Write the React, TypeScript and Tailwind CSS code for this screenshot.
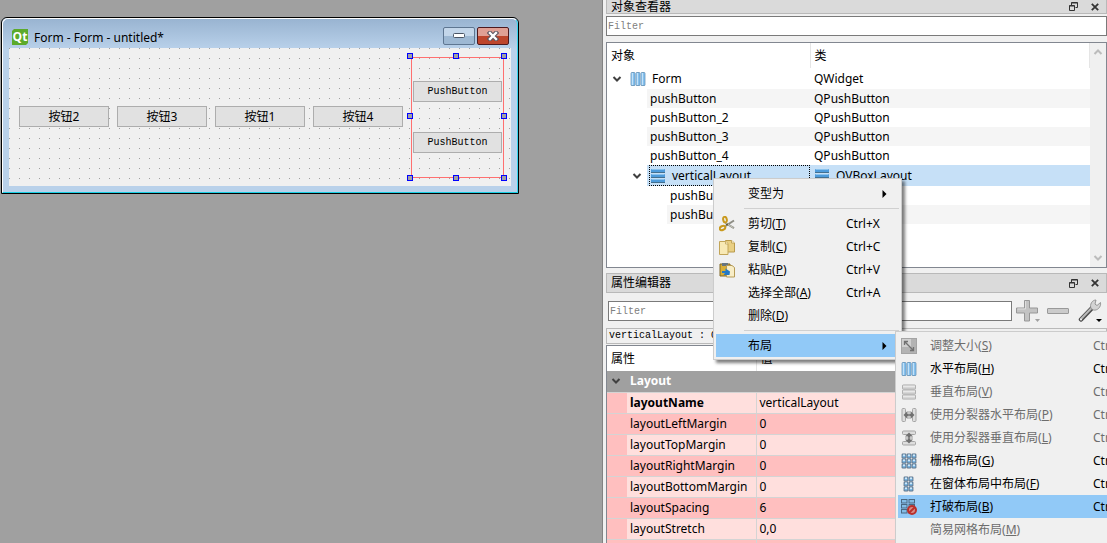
import { useState } from "react";
import type { ReactNode } from "react";
import clsx from "clsx";

type MenuEntry = {
  label: string;
  mnemonic: string;
  shortcut?: string;
  icon?: ReactNode;
  disabled?: boolean;
  active?: boolean;
};

/* ---------- icons ---------- */

function Bars({ vertical, grey }: { vertical?: boolean; grey?: boolean }) {
  const fill = grey ? "#d2d2d2" : "#79baec";
  const light = grey ? "#e8e8e8" : "#c3e2f8";
  const edge = grey ? "#a8a8a8" : "#6f94b3";
  return (
    <svg width="16" height="16" viewBox="0 0 16 16">
      <g transform={vertical ? undefined : "matrix(0 1 1 0 0 0)"}>
        {[1, 6, 11].map((p) => (
          <g key={p}>
            <rect x={p - 0.4} y="1" width="4.800" height="14" rx="1.500" fill={edge} />
            <rect x={p + 0.3} y="1.800" width="3.400" height="12.400" rx="0.500" fill={fill} />
            <rect x={p + 0.8} y="2" width="1.400" height="12" fill={light} />
          </g>
        ))}
      </g>
    </svg>
  );
}

function LayoutBars() {
  return (
    <svg width="16" height="16" viewBox="0 0 16 16">
      {[1, 6, 11].map((p) => (
        <g key={p}>
          <rect x="1" y={p} width="14" height="4" rx="1" fill="#4d9bdb" />
          <rect x="2" y={p} width="12" height="1" fill="#8ac3ee" />
          <rect x="1" y={p + 3} width="14" height="1" fill="#44708f" />
        </g>
      ))}
    </svg>
  );
}

function Squares({ cols }: { cols: number[] }) {
  return (
    <svg width="16" height="16" viewBox="0 0 16 16">
      {cols.map((x) =>
        [1, 6, 11].map((y) => (
          <g key={`${x}-${y}`}>
            <rect x={x - 0.4} y={y - 0.4} width="4.800" height="4.800" rx="1.200" fill="#5d7389" />
            <rect x={x + 0.5} y={y + 0.5} width="3" height="3" fill="#7db9e6" />
            <rect x={x + 1} y={y + 0.5} width="2" height="1.500" fill="#cfe7f8" />
          </g>
        )),
      )}
    </svg>
  );
}

function AdjustIcon() {
  return (
    <svg width="16" height="16" viewBox="0 0 16 16">
      <rect x="0.5" y="0.5" width="15" height="15" fill="#b3b3b3" stroke="#a4a4a4" />
      <path d="M1 1h9v8H1z" fill="#d0d0d0" />
      <path d="M4 4l8 8M3.5 7V3.5H7M12.5 9v3.5H9" fill="none" stroke="#707070" strokeWidth="1.3" />
    </svg>
  );
}

function SplitIcon({ vertical }: { vertical?: boolean }) {
  return (
    <svg width="16" height="16" viewBox="0 0 16 16">
      <g transform={vertical ? "rotate(90 8 8)" : undefined}>
        <rect x="1" y="1.5" width="3.500" height="13" rx="1" fill="#dedede" stroke="#a5a5a5" />
        <rect x="11.5" y="1.5" width="3.500" height="13" rx="1" fill="#dedede" stroke="#a5a5a5" />
        <path d="M2.500 8l4-4v3h3V4l4 4-4 4V9h-3v3z" fill="#707070" />
        <path d="M7.500 4h1v8h-1z" fill="#9c9c9c" />
      </g>
    </svg>
  );
}

function BreakIcon() {
  return (
    <svg width="16" height="16" viewBox="0 0 16 16">
      {[0, 5, 10].map((y) => (
        <g key={y}>
          <path d={`M0 ${y}h6.500v4.500H0zM7.500 ${y}h6.500v4.500H7.500z`} fill="#4a6983" />
          <path d={`M1 ${y + 1}h4.500v2.500H1zM8.500 ${y + 1}h4.500v2.500H8.500z`} fill="#83bce6" />
        </g>
      ))}
      <circle cx="11" cy="11" r="4" fill="#d98a86" stroke="#b9302c" strokeWidth="2" />
      <path d="M8.200 13.800l5.600-5.600" stroke="#b9302c" strokeWidth="2" />
    </svg>
  );
}

function CutIcon() {
  return (
    <svg width="16" height="16" viewBox="0 0 16 16" fill="none">
      <path d="M6.500 7L15 12.200M6.500 10L15 4.500" stroke="#8d8d84" strokeWidth="2" />
      <path d="M7 7.200L14.500 11.800" stroke="#d5d5cc" strokeWidth="0.8" />
      <ellipse cx="6" cy="3.600" rx="1.800" ry="2.800" stroke="#c99a1e" strokeWidth="2" transform="rotate(-12 6 3.600)" />
      <ellipse cx="3.500" cy="12" rx="2.900" ry="1.900" stroke="#c99a1e" strokeWidth="2" transform="rotate(-25 3.500 12)" />
      <circle cx="8" cy="8.500" r="1" fill="#6b5a25" />
    </svg>
  );
}

function CopyIcon() {
  return (
    <svg width="16" height="16" viewBox="0 0 16 16">
      <path d="M6.500 1.500h6l3 2.500v9h-9z" fill="#e9cf83" stroke="#b89a4c" />
      <path d="M0.500 2.500h6l2.500 2v11h-8.500z" fill="#f8e9b5" stroke="#c2a558" />
      <path d="M6.500 2.500v2.500H9" fill="#fff7da" stroke="#c2a558" strokeWidth="0.800" />
      <path d="M12.500 1.500V4h3" fill="#fff7da" stroke="#b89a4c" strokeWidth="0.800" />
    </svg>
  );
}

function PasteIcon() {
  return (
    <svg width="16" height="16" viewBox="0 0 16 16">
      <path d="M1 2h10v12H1z" fill="#d9ae35" stroke="#7e6726" />
      <path d="M3 1h6v3H3z" fill="#66747f" />
      <path d="M7.500 3.500h5.500l2.500 2v9.500h-8z" fill="#f8edc6" stroke="#b69b56" />
      <path d="M3 9h3.500V6.500l4.500 3-0.500 3.500H4.500l1.500-2H3z" fill="#2479c4" />
    </svg>
  );
}

function Chevron({ up, pale }: { up?: boolean; pale?: boolean }) {
  return (
    <svg width="10" height="8" viewBox="0 0 10 8" fill="none">
      <path d={up ? "M1.500 6L5 2.500 8.500 6" : "M1.500 2L5 5.500 8.500 2"} stroke={pale ? "#bcbcbc" : "#404040"} strokeWidth="2" />
    </svg>
  );
}

function FloatIcon() {
  return (
    <svg width="9" height="9" viewBox="0 0 9 9" fill="none" stroke="#333">
      <path d="M2.500 3V0.500h6v5H6.500M2.500 1h6" />
      <path d="M0.500 3.500h5v5h-5zM0.500 4h5" />
    </svg>
  );
}

function CloseIcon() {
  return (
    <svg width="8" height="8" viewBox="0 0 8 8">
      <path d="M0.800 0.800l6.400 6.400M7.200 0.800L0.800 7.200" stroke="#333" strokeWidth="1.800" />
    </svg>
  );
}

function PlusIcon() {
  return (
    <svg width="24" height="24" viewBox="0 0 24 24">
      <path d="M8.500 1.500h5v7.500h8v5h-8v8h-5v-8H0.500V9h8z" fill="#c3c3c3" stroke="#979797" />
      <path d="M9.500 2v8H1.500" fill="none" stroke="#dedede" />
      <path d="M19 20h5l-2.500 3z" fill="#a0a0a0" />
    </svg>
  );
}

function MinusIcon() {
  return (
    <svg width="24" height="24" viewBox="0 0 24 24">
      <rect x="0.500" y="9.500" width="21" height="5" rx="0.500" fill="#cbcbcb" stroke="#999" />
    </svg>
  );
}

function WrenchIcon() {
  return (
    <svg width="24" height="24" viewBox="0 0 24 24">
      <path d="M3 20.500L16 7" stroke="#4e4e4e" strokeWidth="4.500" strokeLinecap="round" />
      <path d="M3 20L15.500 7" stroke="#b9b9b9" strokeWidth="2" strokeLinecap="round" />
      <path d="M13 9.500c-1.500-4 1-8.500 5-8.500l-1 4 2 1.500 3.500-3c1 4.500-3.500 8.500-7 7.500z" fill="#d3d3d3" stroke="#858585" strokeWidth="0.800" />
      <circle cx="3" cy="20.500" r="1" fill="#f0f0f0" />
      <path d="M18 20h6l-3 3z" fill="#000" />
    </svg>
  );
}

/* ---------- data ---------- */

const treeRows = [
  { name: "pushButton", type: "QPushButton", shaded: true },
  { name: "pushButton_2", type: "QPushButton" },
  { name: "pushButton_3", type: "QPushButton", shaded: true },
  { name: "pushButton_4", type: "QPushButton" },
];

const properties = [
  { name: "layoutName", value: "verticalLayout", bold: true },
  { name: "layoutLeftMargin", value: "0" },
  { name: "layoutTopMargin", value: "0" },
  { name: "layoutRightMargin", value: "0" },
  { name: "layoutBottomMargin", value: "0" },
  { name: "layoutSpacing", value: "6" },
  { name: "layoutStretch", value: "0,0" },
  { name: "", value: "" },
];

const editEntries: MenuEntry[] = [
  { label: "剪切", mnemonic: "T", shortcut: "Ctrl+X", icon: <CutIcon /> },
  { label: "复制", mnemonic: "C", shortcut: "Ctrl+C", icon: <CopyIcon /> },
  { label: "粘贴", mnemonic: "P", shortcut: "Ctrl+V", icon: <PasteIcon /> },
  { label: "选择全部", mnemonic: "A", shortcut: "Ctrl+A" },
  { label: "删除", mnemonic: "D" },
];

const layoutEntries: MenuEntry[] = [
  { label: "调整大小", mnemonic: "S", shortcut: "Ctrl+J", icon: <AdjustIcon />, disabled: true },
  { label: "水平布局", mnemonic: "H", shortcut: "Ctrl+1", icon: <Bars vertical /> },
  { label: "垂直布局", mnemonic: "V", shortcut: "Ctrl+2", icon: <Bars grey />, disabled: true },
  { label: "使用分裂器水平布局", mnemonic: "P", shortcut: "Ctrl+3", icon: <SplitIcon />, disabled: true },
  { label: "使用分裂器垂直布局", mnemonic: "L", shortcut: "Ctrl+4", icon: <SplitIcon vertical />, disabled: true },
  { label: "栅格布局", mnemonic: "G", shortcut: "Ctrl+5", icon: <Squares cols={[1, 6, 11]} /> },
  { label: "在窗体布局中布局", mnemonic: "F", shortcut: "Ctrl+6", icon: <Squares cols={[3, 8]} /> },
  { label: "打破布局", mnemonic: "B", shortcut: "Ctrl+0", icon: <BreakIcon />, active: true },
  { label: "简易网格布局", mnemonic: "M", disabled: true },
];

/* ---------- form window ---------- */

function FormButton({ children }: { children: ReactNode }) {
  return (
    <button className="h-[21px] min-w-0 flex-1 border border-[#adadad] bg-[#e1e1e1] text-xs leading-[19px]">
      {children}
    </button>
  );
}

function MonoButton() {
  return (
    <button className="h-[21px] w-full border border-[#adadad] bg-[#e1e1e1] pt-px font-['Liberation_Mono',monospace] text-[10px] leading-[18px]">
      PushButton
    </button>
  );
}

const handlePositions = [
  "-left-1 -top-1",
  "left-[42px] -top-1",
  "-right-[3px] -top-1",
  "-left-1 top-[56px]",
  "-right-[3px] top-[56px]",
  "-left-1 -bottom-[3px]",
  "left-[42px] -bottom-[3px]",
  "-right-[3px] -bottom-[3px]",
];

function FormWindow() {
  return (
    <section className="ml-px w-[518px] max-w-full rounded-t-md border border-black bg-[#b9d1ea]">
      <div className="rounded-t-md border border-t-white border-r-[#35d5ee] border-b-[#18cfe4] border-l-white bg-linear-to-b from-[#99b4d1] to-[#b9d1ea] to-[30px] px-[6px] pb-[6px]">
        <header className="flex h-[29px] items-end gap-[6px] pl-[3px]">
          <svg width="16" height="16" viewBox="0 0 16 16" className="mb-[3px]">
            <path d="M2 0h14v14l-2 2H0V2z" fill="#5caa2b" />
            <text x="8" y="12" textAnchor="middle" fontSize="12" fontWeight="700" fill="#fff" fontFamily="Open Sans, sans-serif">
              Qt
            </text>
          </svg>
          <h1 className="flex-1 text-xs leading-5">Form - Form - untitled*</h1>
          <div className="mb-[3px] flex gap-[2px] pr-[2px]">
            <button
              aria-label="最小化"
              className="flex h-[18px] w-8 items-center justify-center rounded-[2px] border border-[#5e7691] bg-linear-to-b from-[#c3d6ea] from-50% to-[#9db8d3] to-50%"
            >
              <svg width="12" height="6" viewBox="0 0 12 6">
                <rect x="0.500" y="0.500" width="11" height="4" rx="1" fill="#fff" stroke="#4b5666" />
              </svg>
            </button>
            <button
              aria-label="关闭"
              className="flex h-[18px] w-8 items-center justify-center rounded-[2px] border border-[#4d1a1f] bg-linear-to-b from-[#e0a095] from-50% to-[#bd452c] to-50%"
            >
              <svg width="12" height="10" viewBox="0 0 12 10">
                <path d="M3 2l6 6M9 2L3 8" stroke="#5a5561" strokeWidth="4.500" strokeLinecap="square" />
                <path d="M3 2l6 6M9 2L3 8" stroke="#fff" strokeWidth="2.400" strokeLinecap="square" />
              </svg>
            </button>
          </div>
        </header>
        <div className="flex h-[138px] items-center gap-2 bg-[#f0f0f0] bg-[conic-gradient(from_270deg_at_1px_1px,#a0a0a0_90deg,transparent_0)] bg-size-[10px_10px] pr-[7px] pb-px pl-[10px]">
          <FormButton>按钮2</FormButton>
          <FormButton>按钮3</FormButton>
          <FormButton>按钮1</FormButton>
          <FormButton>按钮4</FormButton>
          <div className="relative mt-[9px] h-[121px] w-[93px] self-start bg-[#ff7070] p-px">
            <div className="flex h-full flex-col gap-[30px] bg-[#f0f0f0] bg-[conic-gradient(from_270deg_at_1px_1px,#a0a0a0_90deg,transparent_0)] bg-size-[10px_10px] bg-position-[7px_0px] px-px pt-[23px]">
              <MonoButton />
              <MonoButton />
            </div>
            {handlePositions.map((position) => (
              <span key={position} className={clsx("absolute size-[6px] border border-[#0000ff] bg-[#a0a0a4]", position)} />
            ))}
          </div>
        </div>
      </div>
    </section>
  );
}

/* ---------- docks ---------- */

function DockTitle({ title, compact }: { title: string; compact?: boolean }) {
  return (
    <header
      className={clsx(
        "flex items-center border border-[#b9b9b9] bg-[#dadada] px-1",
        compact ? "h-[14px] border-t-0 leading-3" : "h-5 leading-[18px]",
      )}
    >
      <h2 className="flex-1">{title}</h2>
      <div className="flex items-center gap-[13px] pr-[3px]">
        <button aria-label="浮动">
          <FloatIcon />
        </button>
        <button aria-label="关闭">
          <CloseIcon />
        </button>
      </div>
    </header>
  );
}

function FilterInput() {
  const [text, setText] = useState("");
  return (
    <input
      aria-label="Filter"
      placeholder="Filter"
      value={text}
      onChange={(e) => setText(e.target.value)}
      className="block h-5 w-full min-w-0 border border-[#7a7a7a] bg-white px-px font-['Liberation_Mono',monospace] text-[10px] leading-[18px] placeholder:text-[#808080]"
    />
  );
}

function ObjectTree() {
  return (
    <div className="mt-[6px] flex h-[226px] border border-[#828790] bg-white">
      <div className="min-w-0 flex-1">
        <table className="w-full table-fixed border-collapse text-left">
          <thead>
            <tr className="h-[25px]">
              <th className="w-[203px] border-r border-[#e5e5e5] p-0 pl-1 font-normal">对象</th>
              <th className="border-r border-[#e5e5e5] p-0 pl-1 font-normal">类</th>
            </tr>
          </thead>
          <tbody>
            <tr className="h-[21px]">
              <td className="p-0">
                <div className="flex items-center pl-[5px]">
                  <Chevron />
                  <span className="mr-[6px] ml-2">
                    <Bars vertical />
                  </span>
                  Form
                </div>
              </td>
              <td className="p-0 pl-1">QWidget</td>
            </tr>
            {treeRows.map((row) => (
              <tr key={row.name} className="h-[19px]">
                <td className="p-0 pl-10">
                  <div className={clsx("h-[19px] pl-[3px] leading-[19px]", row.shaded && "bg-[#f5f5f5]")}>{row.name}</div>
                </td>
                <td className={clsx("p-0 pl-1", row.shaded && "bg-[#f5f5f5]")}>{row.type}</td>
              </tr>
            ))}
            <tr className="h-[21px]">
              <td className="p-0">
                <div className="flex h-[21px] items-center pl-[25px]">
                  <Chevron />
                  <div className="ml-[5px] flex h-full flex-1 items-center bg-[#c6e0f7]">
                    <div className="ml-[2px] flex h-full flex-1 items-center gap-[6px] border border-dotted border-black">
                      <LayoutBars />
                      verticalLayout
                    </div>
                  </div>
                </div>
              </td>
              <td className="bg-[#c6e0f7] p-0 pl-1">
                <div className="flex items-center gap-[6px]">
                  <LayoutBars />
                  QVBoxLayout
                </div>
              </td>
            </tr>
            {/* the open menu hides the class column of these two */}
            <tr className="h-[19px]">
              <td className="p-0 pl-[63px]">pushButton_5</td>
              <td />
            </tr>
            <tr className="h-[19px]">
              <td className="p-0 pl-[60px]">
                <div className="h-[19px] bg-[#f5f5f5] pl-[3px] leading-[19px]">pushButton_6</div>
              </td>
              <td className="bg-[#f5f5f5]" />
            </tr>
          </tbody>
        </table>
      </div>
      <div className="flex w-4 flex-col items-center justify-between bg-[#f0f0f0] py-[5px]">
        <Chevron up pale />
        <Chevron pale />
      </div>
    </div>
  );
}

function PropertyTable() {
  return (
    <div className="mt-px border-t border-l border-[#828790] bg-white">
      <table className="w-full table-fixed border-collapse text-left">
        <thead>
          <tr className="h-[25px]">
            <th className="w-5 p-0" />
            <th className="w-[129px] border-r border-[#e5e5e5] p-0 font-normal">
              <span className="-ml-4">属性</span>
            </th>
            <th className="p-0 pl-1 font-normal">值</th>
          </tr>
        </thead>
        <tbody>
          <tr className="h-[21px] border-b border-[#d4d4d4] bg-[#a0a0a0] text-white">
            <td className="p-0 pl-1">
              <Chevron />
            </td>
            <td colSpan={2} className="p-0 pl-[3px] font-bold">
              Layout
            </td>
          </tr>
          {properties.map((p, i) => {
            const tone = i % 2 === 0 ? "bg-[#ffdfdd]" : "bg-[#ffbfbf]";
            return (
              <tr key={i} className="h-[21px] border-b border-[#d4d4d4]">
                <td className="bg-[#ffbfbf] p-0" />
                <td className={clsx("border-r border-[#d4d4d4] p-0 pl-[3px] whitespace-nowrap", tone, p.bold && "font-bold")}>{p.name}</td>
                <td className={clsx("p-0 pl-[3px]", tone)}>{p.value}</td>
              </tr>
            );
          })}
        </tbody>
      </table>
    </div>
  );
}

/* ---------- menus ---------- */

function MenuArrow() {
  return (
    <svg width="5" height="8" viewBox="0 0 5 8">
      <path d="M0.500 0l4 4-4 4z" fill="#000" />
    </svg>
  );
}

function MenuItem({ entry }: { entry: MenuEntry }) {
  return (
    <li>
      <button
        disabled={entry.disabled}
        className={clsx(
          "flex h-[23px] w-full items-center text-left whitespace-nowrap",
          entry.active && "bg-[#91c9f7]",
          entry.disabled && "text-[#6d6d6d]",
        )}
      >
        <span className="flex w-8 pl-[3px]">{entry.icon}</span>
        <span className="flex-1">
          {entry.label}(<u>{entry.mnemonic}</u>)
        </span>
        <span className="w-[53px]">{entry.shortcut}</span>
      </button>
    </li>
  );
}

function Separator() {
  return (
    <li className="flex h-[7px] items-center pl-7">
      <span className="h-px w-full bg-[#d0d0d0]" />
    </li>
  );
}

function ContextMenu() {
  return (
    <ul className="absolute top-[178px] left-[110px] w-[189px] border border-[#ccc] bg-[#f0f0f0] px-[2px] pt-[3px] pb-[2px] shadow-[3px_3px_3px_rgba(0,0,0,0.5)]">
      <li>
        <button className="flex h-[23px] w-full items-center pr-3 pl-8 text-left">
          <span className="flex-1">变型为</span>
          <MenuArrow />
        </button>
      </li>
      <Separator />
      {editEntries.map((entry) => (
        <MenuItem key={entry.label} entry={entry} />
      ))}
      <Separator />
      <li>
        <button className="flex h-[23px] w-full items-center bg-[#91c9f7] pr-3 pl-8 text-left">
          <span className="flex-1">布局</span>
          <MenuArrow />
        </button>
      </li>
    </ul>
  );
}

function LayoutMenu() {
  return (
    <ul className="absolute top-[331px] left-[292px] w-[254px] border border-[#ccc] bg-[#f0f0f0] p-[2px] shadow-[3px_3px_3px_rgba(0,0,0,0.5)]">
      {layoutEntries.map((entry) => (
        <MenuItem key={entry.label} entry={entry} />
      ))}
    </ul>
  );
}

export default function App() {
  return (
    <div className="flex h-screen overflow-hidden bg-[#a0a0a0] font-['Noto_Sans','Noto_Sans_CJK_SC',sans-serif] text-xs leading-[18px] text-black">
      <main className="min-w-0 flex-1 pt-[17px]">
        <FormWindow />
      </main>

      <aside className="relative w-[505px] shrink-0 border-l border-[#828282] bg-[#f0f0f0] pl-[3px]">
        <section>
          <DockTitle title="对象查看器" compact />
          <div className="mt-[2px]">
            <FilterInput />
          </div>
          <ObjectTree />
        </section>

        <section className="mt-[5px]">
          <DockTitle title="属性编辑器" />
          <div className="flex items-center gap-1 pt-[6px] pr-[5px] pb-[5px] pl-[2px]">
            <FilterInput />
            <div className="flex shrink-0 gap-[7px]">
              <button aria-label="添加动态属性">
                <PlusIcon />
              </button>
              <button aria-label="删除动态属性">
                <MinusIcon />
              </button>
              <button aria-label="配置">
                <WrenchIcon />
              </button>
            </div>
          </div>
          <p className="h-4 border border-[#b9b9b9] px-[2px] font-['Liberation_Mono',monospace] text-[10px] leading-[14px]">
            verticalLayout : QVBoxLayout
          </p>
          <PropertyTable />
        </section>

        <ContextMenu />
        <LayoutMenu />
      </aside>
    </div>
  );
}
